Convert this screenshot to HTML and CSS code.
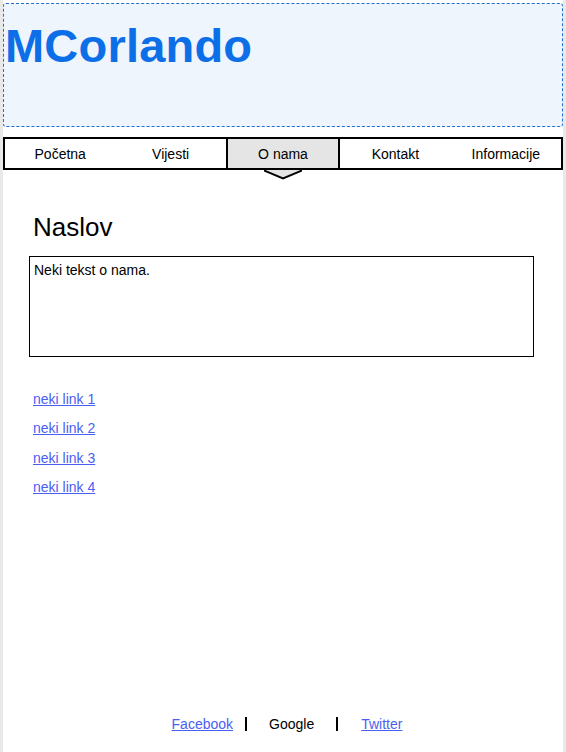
FILE: index.html
```
<!DOCTYPE html>
<html>
<head>
<meta charset="utf-8">
<link rel="stylesheet" href="styles.css">
</head>
<body>
<div class="page">
  <header class="header">
    <h1 class="logo">MCorlando</h1>
  </header>
  <nav class="nav">
    <a class="nav-item">Početna</a>
    <a class="nav-item">Vijesti</a>
    <a class="nav-item active">O nama
      <svg class="arrow" width="38" height="10" viewBox="0 0 38 10"><polygon points="0,0 19,8.5 38,0" fill="#e5e5e5"/><polyline points="0,0.5 19,8.5 38,0.5" fill="none" stroke="#000" stroke-width="2"/></svg>
    </a>
    <a class="nav-item">Kontakt</a>
    <a class="nav-item">Informacije</a>
  </nav>
  <main class="content">
    <h2 class="title">Naslov</h2>
    <div class="textbox">Neki tekst o nama.</div>
    <ul class="links">
      <li><a href="#">neki link 1</a></li>
      <li><a href="#">neki link 2</a></li>
      <li><a href="#">neki link 3</a></li>
      <li><a href="#">neki link 4</a></li>
    </ul>
  </main>
  <footer class="footer">
    <a href="#">Facebook</a>
    <span class="sep"></span>
    <span class="plain">Google</span>
    <span class="sep"></span>
    <a href="#">Twitter</a>
  </footer>
</div>
</body>
</html>
```
FILE: styles.css
```
html, body {
  margin: 0;
  padding: 0;
  background: #fff;
}
body {
  font-family: "Liberation Sans", Arial, sans-serif;
  color: #000;
}
.page {
  width: 560px;
  height: 749px;
  border-left: 3px solid #e9e9e9;
  border-right: 3px solid #e9e9e9;
  border-bottom: 3px solid #e9e9e9;
  padding-top: 3px;
  box-sizing: content-box;
  display: flex;
  flex-direction: column;
}
.header {
  height: 122px;
  border: 1px dashed #1f6fd0;
  border-radius: 3px;
  background: #eef5fd;
}
.logo {
  margin: 0;
  padding: 18px 0 0 1px;
  font-size: 47px;
  line-height: 47px;
  font-weight: bold;
  color: #0d6fe8;
  letter-spacing: 0.2px;
}
.nav {
  margin-top: 10px;
  height: 29px;
  border: 2px solid #000;
  display: flex;
}
.nav-item {
  position: relative;
  flex: 1;
  display: flex;
  align-items: center;
  justify-content: center;
  font-size: 14px;
  color: #000;
  text-decoration: none;
}
.nav-item.active {
  background: #e5e5e5;
  border-left: 2px solid #000;
  border-right: 2px solid #000;
}
.arrow {
  position: absolute;
  left: 50%;
  top: 31px;
  margin-left: -19px;
}
.content {
  flex: 1;
  padding: 0 29px 0 26px;
}
.title {
  margin: 42px 0 0 4px;
  font-size: 26px;
  line-height: 30px;
  font-weight: normal;
}
.textbox {
  margin-top: 14px;
  height: 101px;
  border: 1px solid #000;
  padding: 5px 4px;
  box-sizing: border-box;
  font-size: 14px;
  line-height: 16px;
}
.links {
  list-style: none;
  margin: 34px 0 0 4px;
  padding: 0;
}
.links li {
  height: 29.3px;
  font-size: 14px;
  line-height: 16px;
}
a {
  color: #4b5ef4;
  text-decoration: underline;
}
.footer {
  height: 36px;
  display: flex;
  justify-content: center;
  align-items: flex-start;
  font-size: 14px;
  line-height: 16px;
  padding-left: 8px;
}
.footer .sep {
  width: 2px;
  height: 14px;
  background: #000;
  margin: 1px 0 0 0;
}
.footer a:first-child { margin-right: 12px; }
.footer .plain { margin: 0 22px 0 22px; }
.footer a:last-child { margin-left: 23px; }
```
